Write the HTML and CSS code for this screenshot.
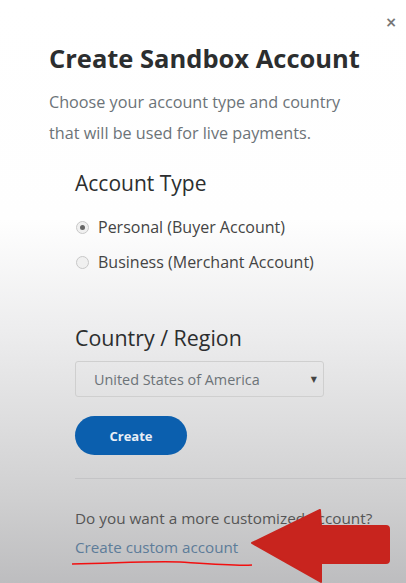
FILE: index.html
```html
<!DOCTYPE html>
<html lang="en">
<head>
<meta charset="utf-8">
<title>Create Sandbox Account</title>
<link rel="stylesheet" href="styles.css">
</head>
<body>
<div class="modal">
  <button class="close" aria-label="Close">×</button>
  <h1 class="title">Create Sandbox Account</h1>
  <p class="intro">Choose your account type and country<br>that will be used for live payments.</p>
  <section class="group type">
    <h2 class="group-title">Account Type</h2>
    <label class="radio"><span class="dot checked"></span>Personal (Buyer Account)</label>
    <label class="radio"><span class="dot"></span>Business (Merchant Account)</label>
  </section>
  <section class="group country">
    <h2 class="group-title">Country / Region</h2>
    <div class="select"><span>United States of America</span><span class="caret">▼</span></div>
    <button class="create">Create</button>
  </section>
  <div class="divider"></div>
  <section class="custom">
    <p class="question">Do you want a more customized account?</p>
    <a class="link" href="#">Create custom account</a>
  </section>
</div>
<svg class="annot" width="406" height="583" viewBox="0 0 406 583">
  <path d="M72 564 C120 563 150 561 180 562 C210 564 235 566 252 565" fill="none" stroke="#f21010" stroke-width="1.6"/>
  <path d="M252 543 L320 510 L321 526 L386 526 Q389 526 389 529 L389 560 Q389 563 386 563 L321 563 L321 582 Z" fill="#c8241e" stroke="#c8241e" stroke-width="2" stroke-linejoin="round"/>
</svg>
</body>
</html>
```

FILE: styles.css
```css
html, body {
  margin: 0;
  padding: 0;
}
body {
  width: 406px;
  height: 583px;
  overflow: hidden;
  position: relative;
  font-family: "Open Sans", "Noto Sans", sans-serif;
  background: linear-gradient(to bottom, #ffffff 0px, #fefefe 220px, #ededee 330px, #dcdcdd 430px, #cfcfd0 500px, #bdbdbf 583px);
  color: #333;
}
.modal {
  padding: 41px 0 0 49px;
}
.close {
  position: absolute;
  top: 13px;
  right: 8px;
  border: 0;
  background: none;
  color: #777;
  font-family: "DejaVu Sans", sans-serif;
  font-size: 14px;
  font-weight: bold;
  padding: 0;
  width: 14px;
  height: 18px;
  line-height: 18px;
}
.title {
  margin: 0;
  font-size: 25.5px;
  font-weight: 700;
  color: #2c2e2f;
  line-height: 34px;
}
.intro {
  margin: 12px 0 0;
  font-size: 16.2px;
  line-height: 31px;
  color: #6c7378;
}
.group {
  margin: 20px 0 0 26px;
}
.group-title {
  margin: 0 0 9px;
  font-size: 21px;
  font-weight: 400;
  line-height: 28px;
  color: #2c2e2f;
}
.type .group-title {
  margin-bottom: 13px;
}
.radio {
  display: flex;
  align-items: center;
  gap: 9px;
  font-size: 16px;
  line-height: 35px;
  height: 35px;
  color: #444;
  margin-left: 1px;
}
.dot {
  width: 13px;
  height: 13px;
  border-radius: 50%;
  border: 1px solid #c8c8c8;
  background: #f0f0f0;
  box-sizing: border-box;
  display: flex;
  align-items: center;
  justify-content: center;
}
.dot.checked::after {
  content: "";
  width: 5px;
  height: 5px;
  border-radius: 50%;
  background: #666;
}
.country {
  margin-top: 44px;
}
.country .group-title {
  margin-bottom: 9px;
  font-size: 21.4px;
}
.select {
  width: 249px;
  height: 36px;
  box-sizing: border-box;
  border: 1px solid #cfcfcf;
  border-radius: 3px;
  display: flex;
  align-items: center;
  justify-content: space-between;
  padding: 0 6px 0 18px;
  font-size: 14.4px;
  color: #6c7378;
}
.caret {
  font-size: 8px;
  color: #444;
  font-family: "DejaVu Sans", sans-serif;
}
.create {
  display: block;
  margin-top: 19px;
  width: 112px;
  height: 39px;
  border: 0;
  border-radius: 20px;
  background: #0b5fae;
  color: #e8eef6;
  font-family: "Open Sans", sans-serif;
  font-weight: 700;
  font-size: 13px;
}
.divider {
  margin: 23px 0 0 26px;
  height: 1px;
  background: #c4c4c6;
}
.custom {
  margin: 27px 0 0 26px;
}
.question {
  margin: 0;
  font-size: 15.3px;
  line-height: 24px;
  color: #555;
}
.link {
  display: block;
  margin-top: 5px;
  font-size: 15.2px;
  line-height: 24px;
  color: #5d7c99;
  text-decoration: none;
}
.annot {
  position: absolute;
  left: 0;
  top: 0;
  pointer-events: none;
}
```
